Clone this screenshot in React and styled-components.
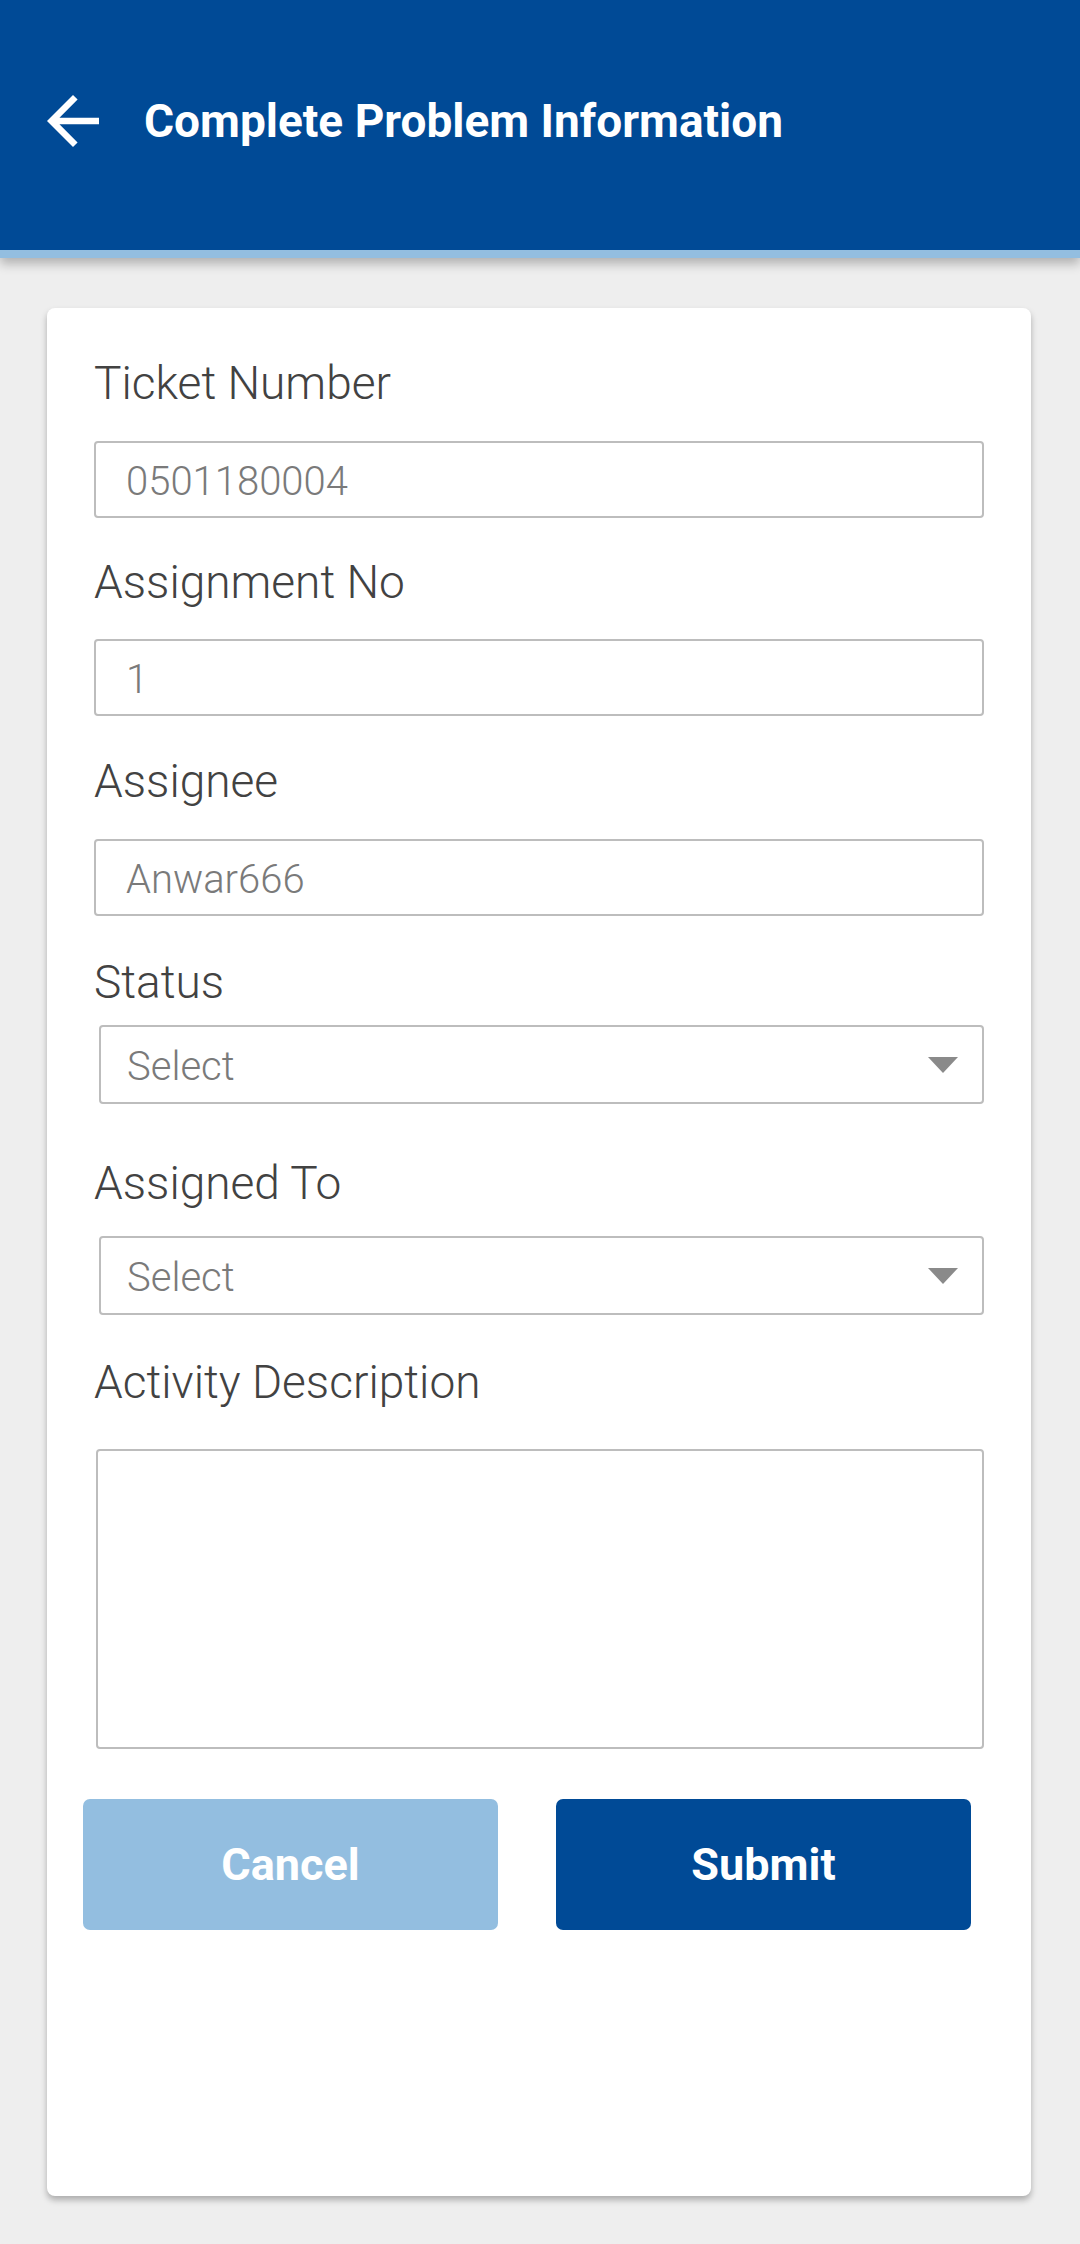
import React from "react"
import styled, { createGlobalStyle } from "styled-components"

const blue = "#004A96"
const paleBlue = "#93BEE0"

const GlobalStyle = createGlobalStyle`
  html, body {
    margin: 0;
    padding: 0;
    background: #EEEEEE;
  }
  body {
    font-family: Roboto, "Noto Sans", sans-serif;
  }
  * {
    box-sizing: border-box;
  }
`

const Page = styled.div`
  width: 1080px;
  min-height: 2244px;
  background: #EEEEEE;
  overflow: hidden;
`

const Header = styled.header`
  height: 258px;
  background: ${blue};
  border-bottom: 8px solid ${paleBlue};
  box-shadow: 0 6px 10px rgba(0, 0, 0, 0.25);
  display: flex;
  align-items: center;
  padding: 0 0 8px 34px;
  gap: 32px;
  position: relative;
  z-index: 1;
`

const BackIcon = styled.svg`
  width: 78px;
  height: 78px;
  fill: #FFFFFF;
  flex: none;
`

const Title = styled.h1`
  margin: 0;
  color: #FFFFFF;
  font-family: Roboto, sans-serif;
  font-weight: 700;
  font-size: 46px;
  letter-spacing: 0;
`

const Card = styled.main`
  margin: 50px 49px 0 47px;
  height: 1888px;
  background: #FFFFFF;
  border-radius: 8px;
  box-shadow: 0 4px 6px rgba(0, 0, 0, 0.28);
  padding: 47px 47px 0 47px;
  display: flex;
  flex-direction: column;
`

const Field = styled.div`
  display: flex;
  flex-direction: column;
  gap: ${(p) => p.$gap}px;
  margin-bottom: ${(p) => p.$after}px;
`

const Label = styled.label`
  font-family: Roboto, sans-serif;
  font-weight: 300;
  font-size: 46px;
  line-height: 56px;
  color: #424242;
`

const TextBox = styled.div`
  height: 77px;
  border: 2px solid #BDBDBD;
  border-radius: 4px;
  display: flex;
  align-items: center;
  padding: 4px 30px 0;
  font-family: Roboto, sans-serif;
  font-weight: 300;
  font-size: 40px;
  color: #7A7A7A;
  margin-left: ${(p) => p.$inset || 0}px;
`

const SelectBox = styled(TextBox)`
  height: 79px;
  justify-content: space-between;
  padding: 4px 24px 0 26px;
`

const Caret = styled.span`
  width: 0;
  height: 0;
  margin-top: -4px;
  border-left: 15px solid transparent;
  border-right: 15px solid transparent;
  border-top: 16px solid #8A8A8A;
`

const TextArea = styled.div`
  height: 300px;
  margin-left: 2px;
  border: 2px solid #BDBDBD;
  border-radius: 4px;
`

const Buttons = styled.div`
  display: flex;
  gap: 58px;
  margin-left: -11px;
`

const Button = styled.button`
  width: 415px;
  height: 131px;
  border: none;
  border-radius: 7px;
  background: ${(p) => (p.$primary ? blue : paleBlue)};
  color: #FFFFFF;
  font-family: Roboto, sans-serif;
  font-weight: 700;
  font-size: 45px;
  padding: 0;
`

const fields = [
  { label: "Ticket Number", value: "0501180004", gap: 30, after: 36 },
  { label: "Assignment No", value: "1", gap: 29, after: 37 },
  { label: "Assignee", value: "Anwar666", gap: 30, after: 38 },
]

export default function App() {
  return (
    <Page>
      <GlobalStyle />
      <Header>
        <BackIcon viewBox="0 0 24 24">
          <path d="M20 11H7.83l5.59-5.59L12 4l-8 8 8 8 1.41-1.41L7.83 13H20v-2z" />
        </BackIcon>
        <Title>Complete Problem Information</Title>
      </Header>
      <Card>
        {fields.map((f) => (
          <Field key={f.label} $gap={f.gap} $after={f.after}>
            <Label>{f.label}</Label>
            <TextBox>{f.value}</TextBox>
          </Field>
        ))}
        <Field $gap={15} $after={51}>
          <Label>Status</Label>
          <SelectBox $inset={5}>
            Select
            <Caret />
          </SelectBox>
        </Field>
        <Field $gap={25} $after={39}>
          <Label>Assigned To</Label>
          <SelectBox $inset={5}>
            Select
            <Caret />
          </SelectBox>
        </Field>
        <Field $gap={39} $after={50}>
          <Label>Activity Description</Label>
          <TextArea />
        </Field>
        <Buttons>
          <Button>Cancel</Button>
          <Button $primary>Submit</Button>
        </Buttons>
      </Card>
    </Page>
  )
}
